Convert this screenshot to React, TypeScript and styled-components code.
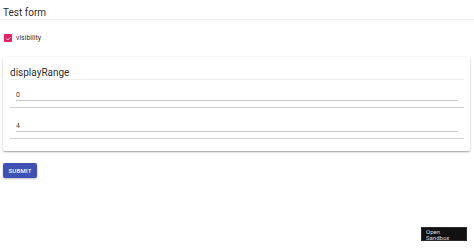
import React from "react";
import styled, { createGlobalStyle } from "styled-components";

const GlobalStyle = createGlobalStyle`
  html, body {
    margin: 0;
    padding: 0;
    background: #fff;
    font-family: Roboto, "Liberation Sans", Arial, sans-serif;
    color: rgba(0, 0, 0, 0.87);
  }
`;

const Page = styled.div`
  display: flex;
  flex-direction: column;
  min-height: 248px;
`;

const FormTitle = styled.h1`
  margin: 0;
  padding: 7px 3px 1px;
  font-size: 10px;
  line-height: 11px;
  font-weight: 400;
  border-bottom: 1px solid #ececec;
`;

const Body = styled.div`
  display: flex;
  flex-direction: column;
  padding: 0 3px;
`;

const CheckRow = styled.label`
  display: flex;
  align-items: center;
  gap: 4px;
  margin-top: 14px;
  padding-left: 1px;
  height: 8px;
  font-size: 7px;
  line-height: 8px;
`;

const CheckBox = styled.span`
  display: flex;
  align-items: center;
  justify-content: center;
  width: 8px;
  height: 8px;
  border-radius: 1px;
  background: #e91e63;
`;

const Card = styled.section`
  display: flex;
  flex-direction: column;
  margin: 15px 1px 0 0;
  padding: 10px 6px 12px 7px;
  background: #fff;
  border-radius: 2px;
  box-shadow: 0 1px 3px rgba(0, 0, 0, 0.2), 0 1px 1px rgba(0, 0, 0, 0.12),
    0 2px 1px -1px rgba(0, 0, 0, 0.1);
`;

const CardTitle = styled.h2`
  margin: 0;
  padding-bottom: 1px;
  font-size: 10px;
  line-height: 11px;
  font-weight: 400;
  border-bottom: 1px solid #ededed;
`;

const FieldGroup = styled.div<{ $top: number }>`
  display: flex;
  flex-direction: column;
  padding: ${p => p.$top}px 6px 6px;
  border-bottom: 1px solid #d2d2d2;
`;

const FieldInput = styled.div`
  padding-bottom: 1px;
  font-size: 7px;
  line-height: 8px;
  color: rgba(0, 0, 0, 0.8);
  border-bottom: 1px solid #c9c9c9;
`;

const Actions = styled.div`
  display: flex;
  margin-top: 12px;
`;

const SubmitButton = styled.button`
  width: 34px;
  height: 15px;
  padding: 0;
  border: none;
  border-radius: 2px;
  background: #3f51b5;
  color: #fff;
  font-family: Roboto, "Liberation Sans", Arial, sans-serif;
  font-size: 6px;
  font-weight: 500;
  letter-spacing: 0.2px;
  box-shadow: 0 1px 2px rgba(0, 0, 0, 0.25);
`;

const SandboxBadge = styled.a`
  position: fixed;
  right: 7px;
  bottom: 7px;
  box-sizing: border-box;
  width: 46px;
  height: 14px;
  padding: 1px 4px;
  background: #111;
  border: 1px solid #2a2a2a;
  color: #ddd;
  font-size: 6px;
  line-height: 6px;
  text-decoration: none;
`;

const BadgeText = styled.span`
  display: block;
  max-width: 26px;
`;

const fields = [
  { value: "0", top: 11 },
  { value: "4", top: 14 },
];

export default function App() {
  return (
    <>
      <GlobalStyle />
      <Page>
        <FormTitle>Test form</FormTitle>
        <Body>
          <CheckRow>
            <CheckBox>
              <svg width="7" height="7" viewBox="0 0 24 24">
                <path
                  d="M5 12.5l4.5 4.5L19 7.5"
                  fill="none"
                  stroke="#fff"
                  strokeWidth="3.2"
                />
              </svg>
            </CheckBox>
            visibility
          </CheckRow>

          <Card>
            <CardTitle>displayRange</CardTitle>
            {fields.map(field => (
              <FieldGroup key={field.value} $top={field.top}>
                <FieldInput>{field.value}</FieldInput>
              </FieldGroup>
            ))}
          </Card>

          <Actions>
            <SubmitButton type="button">SUBMIT</SubmitButton>
          </Actions>
        </Body>
      </Page>
      <SandboxBadge href="#">
        <BadgeText>Open Sandbox</BadgeText>
      </SandboxBadge>
    </>
  );
}
